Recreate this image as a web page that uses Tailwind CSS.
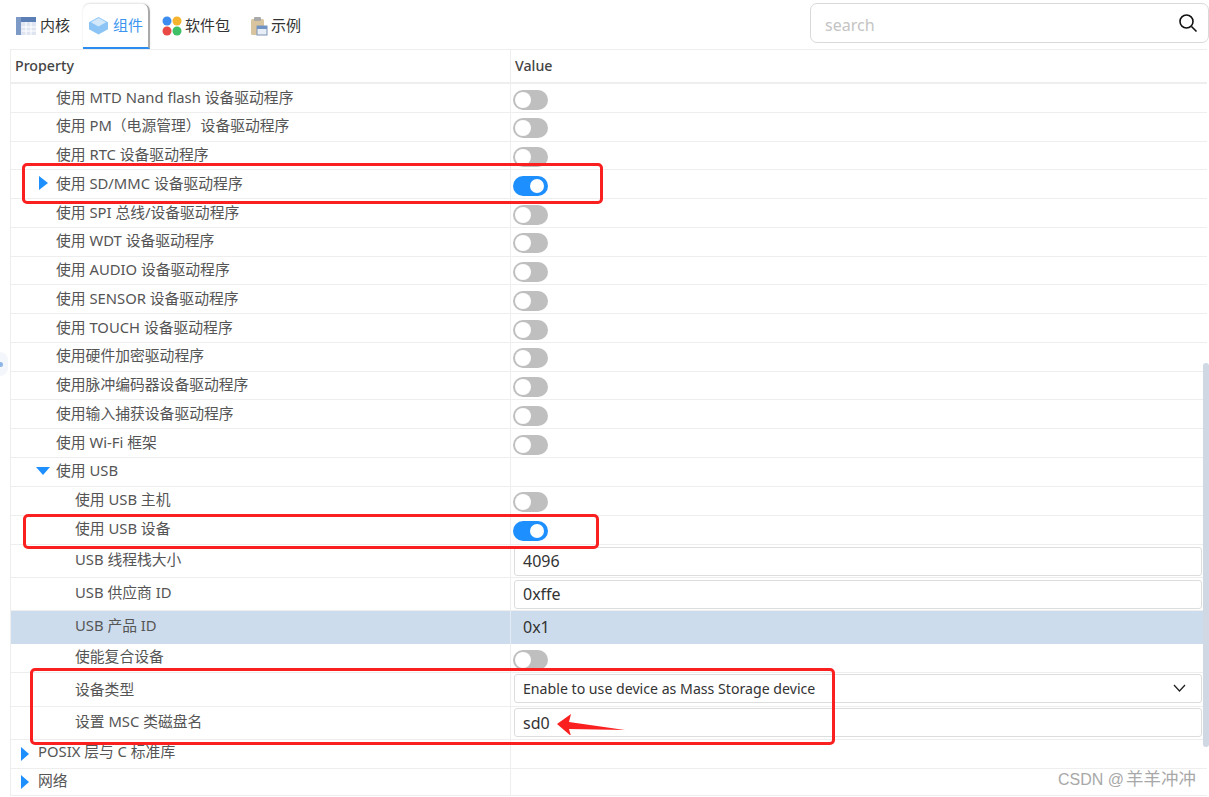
<!DOCTYPE html>
<html lang="en">
  <head>
    <meta charset="UTF-8" />
    <title>组件</title>
    <script src="https://cdn.jsdelivr.net/npm/@tailwindcss/browser@4"></script>
  </head>
  <body class="bg-white">
    <div class="relative w-[1209px] h-[797px] overflow-hidden bg-white font-['Noto_Sans','Noto_Sans_CJK_SC',sans-serif] text-[14.800px] leading-[21px] text-[#555]">
      <!-- Tabs -->
      <div class="flex h-[49px] items-end justify-between pr-[1px]">
        <div class="flex h-[45px] items-stretch pl-[16px] text-[15px] text-[#333]">
          <div class="flex items-center w-[67px] gap-[4px] pb-[2px]">
            <svg class="w-[20px] h-[20px]" viewBox="0 0 20 20">
              <rect x="0" y="1" width="20" height="18" fill="#dfe5f0" />
              <rect x="0" y="1" width="20" height="5" fill="#5b7fb5" />
              <rect x="0" y="1" width="5" height="18" fill="#7d9ac6" />
              <path d="M5.500 11h14.500M5.500 15h14.500M10 6v13M15 6v13" stroke="#fff" stroke-width="1" />
            </svg>
            <span>内核</span>
          </div>
          <div class="flex items-center w-[67px] gap-[5px] pl-[6px] rounded-t-[7px] border-b-[2px] border-b-[#2b8eee] border-r-[2px] border-r-[#aaa] shadow-[0_-1px_2px_rgba(0,0,0,0.12)] text-[#3c96f0]">
            <svg class="w-[19px] h-[19px]" viewBox="0 0 20 20">
              <path d="M10 1l10 5.500v7.500l-10 5.500-10-5.500v-7.500z" fill="#8cc4f5" />
              <path d="M10 2l8 4.500-8 4.500-8-4.500z" fill="#d3e9fb" />
            </svg>
            <span>组件</span>
          </div>
          <div class="flex items-center w-[88px] gap-[3px] pl-[12px] pb-[2px]">
            <svg class="w-[20px] h-[20px]" viewBox="0 0 20 20">
              <circle cx="5" cy="5" r="4.500" fill="#3d8df0" />
              <circle cx="15" cy="5" r="4.500" fill="#f5b32e" />
              <circle cx="5" cy="15" r="4.500" fill="#ea4a45" />
              <circle cx="15" cy="15" r="4.500" fill="#3fbf66" />
            </svg>
            <span>软件包</span>
          </div>
          <div class="flex items-center gap-[3px] pl-[12px] pb-[2px]">
            <svg class="w-[18px] h-[20px]" viewBox="0 0 18 20">
              <rect x="1" y="3" width="13" height="16" rx="1.500" fill="#d9c4a0" />
              <rect x="4" y="1" width="7" height="4" rx="1" fill="#a9a9a9" />
              <rect x="7" y="10" width="10" height="9" fill="#e8eef7" stroke="#7d94b5" />
              <rect x="7" y="10" width="10" height="3" fill="#6f93c4" />
            </svg>
            <span>示例</span>
          </div>
        </div>
        <div class="flex items-center justify-between w-[399px] h-[40px] mb-[6px] mr-[-1px] pl-[14px] pr-[10px] border border-[#d9d9d9] rounded-[7px]">
          <span class="pt-[5px] text-[16px] text-[#c4c4c4]">search</span>
          <svg class="w-[20px] h-[20px]" viewBox="0 0 20 20" fill="none" stroke="#111" stroke-width="1.600">
            <circle cx="8.500" cy="8.500" r="6.500" />
            <path d="M13.500 13.500l5 5" />
          </svg>
        </div>
      </div>

      <!-- Property table -->
      <div class="ml-[10px] w-[1197px] border-l border-[#eee] border-t">
        <div class="flex h-[34px] items-center border-b-[2px] border-[#eee] text-[14.200px] font-medium text-[#444]">
          <div class="w-[500px] pl-[4px] pb-[2px] border-r border-[#eee] h-full flex items-center">Property</div>
          <div class="pl-[4px] pb-[2px]">Value</div>
        </div>

        <div class="flex h-[28.770px] border-b border-[#eee]">
          <div class="w-[500px] pl-[45px] pt-[2.500px] border-r border-[#eee]">使用 MTD Nand flash 设备驱动程序</div>
          <div class="pl-[2px] pt-[5.500px]"><div class="flex items-center justify-start w-[35px] h-[20px] p-[2px] rounded-full bg-[#bfbfbf]"><div class="w-[16px] h-[16px] rounded-full bg-white"></div></div></div>
        </div>
        <div class="flex h-[28.770px] border-b border-[#eee]">
          <div class="w-[500px] pl-[45px] pt-[2.500px] border-r border-[#eee]">使用 PM（电源管理）设备驱动程序</div>
          <div class="pl-[2px] pt-[5.500px]"><div class="flex items-center justify-start w-[35px] h-[20px] p-[2px] rounded-full bg-[#bfbfbf]"><div class="w-[16px] h-[16px] rounded-full bg-white"></div></div></div>
        </div>
        <div class="flex h-[28.770px] border-b border-[#eee]">
          <div class="w-[500px] pl-[45px] pt-[2.500px] border-r border-[#eee]">使用 RTC 设备驱动程序</div>
          <div class="pl-[2px] pt-[5.500px]"><div class="flex items-center justify-start w-[35px] h-[20px] p-[2px] rounded-full bg-[#bfbfbf]"><div class="w-[16px] h-[16px] rounded-full bg-white"></div></div></div>
        </div>
        <div class="flex h-[28.770px] border-b border-[#eee]">
          <div class="relative w-[500px] pl-[45px] pt-[2.500px] border-r border-[#eee]"><span class="absolute left-[28px] top-[6px] w-0 h-0 border-y-[7px] border-y-transparent border-l-[9px] border-l-[#1e8fff]"></span>使用 SD/MMC 设备驱动程序</div>
          <div class="pl-[2px] pt-[5.500px]"><div class="flex items-center justify-end w-[35px] h-[20px] p-[3px] pr-[4px] rounded-full bg-[#1e8fff]"><div class="w-[14px] h-[14px] rounded-full bg-white"></div></div></div>
        </div>
        <div class="flex h-[28.770px] border-b border-[#eee]">
          <div class="w-[500px] pl-[45px] pt-[2.500px] border-r border-[#eee]">使用 SPI 总线/设备驱动程序</div>
          <div class="pl-[2px] pt-[5.500px]"><div class="flex items-center justify-start w-[35px] h-[20px] p-[2px] rounded-full bg-[#bfbfbf]"><div class="w-[16px] h-[16px] rounded-full bg-white"></div></div></div>
        </div>
        <div class="flex h-[28.770px] border-b border-[#eee]">
          <div class="w-[500px] pl-[45px] pt-[2.500px] border-r border-[#eee]">使用 WDT 设备驱动程序</div>
          <div class="pl-[2px] pt-[5.500px]"><div class="flex items-center justify-start w-[35px] h-[20px] p-[2px] rounded-full bg-[#bfbfbf]"><div class="w-[16px] h-[16px] rounded-full bg-white"></div></div></div>
        </div>
        <div class="flex h-[28.770px] border-b border-[#eee]">
          <div class="w-[500px] pl-[45px] pt-[2.500px] border-r border-[#eee]">使用 AUDIO 设备驱动程序</div>
          <div class="pl-[2px] pt-[5.500px]"><div class="flex items-center justify-start w-[35px] h-[20px] p-[2px] rounded-full bg-[#bfbfbf]"><div class="w-[16px] h-[16px] rounded-full bg-white"></div></div></div>
        </div>
        <div class="flex h-[28.770px] border-b border-[#eee]">
          <div class="w-[500px] pl-[45px] pt-[2.500px] border-r border-[#eee]">使用 SENSOR 设备驱动程序</div>
          <div class="pl-[2px] pt-[5.500px]"><div class="flex items-center justify-start w-[35px] h-[20px] p-[2px] rounded-full bg-[#bfbfbf]"><div class="w-[16px] h-[16px] rounded-full bg-white"></div></div></div>
        </div>
        <div class="flex h-[28.770px] border-b border-[#eee]">
          <div class="w-[500px] pl-[45px] pt-[2.500px] border-r border-[#eee]">使用 TOUCH 设备驱动程序</div>
          <div class="pl-[2px] pt-[5.500px]"><div class="flex items-center justify-start w-[35px] h-[20px] p-[2px] rounded-full bg-[#bfbfbf]"><div class="w-[16px] h-[16px] rounded-full bg-white"></div></div></div>
        </div>
        <div class="flex h-[28.770px] border-b border-[#eee]">
          <div class="w-[500px] pl-[45px] pt-[2.500px] border-r border-[#eee]">使用硬件加密驱动程序</div>
          <div class="pl-[2px] pt-[5.500px]"><div class="flex items-center justify-start w-[35px] h-[20px] p-[2px] rounded-full bg-[#bfbfbf]"><div class="w-[16px] h-[16px] rounded-full bg-white"></div></div></div>
        </div>
        <div class="flex h-[28.770px] border-b border-[#eee]">
          <div class="w-[500px] pl-[45px] pt-[2.500px] border-r border-[#eee]">使用脉冲编码器设备驱动程序</div>
          <div class="pl-[2px] pt-[5.500px]"><div class="flex items-center justify-start w-[35px] h-[20px] p-[2px] rounded-full bg-[#bfbfbf]"><div class="w-[16px] h-[16px] rounded-full bg-white"></div></div></div>
        </div>
        <div class="flex h-[28.770px] border-b border-[#eee]">
          <div class="w-[500px] pl-[45px] pt-[2.500px] border-r border-[#eee]">使用输入捕获设备驱动程序</div>
          <div class="pl-[2px] pt-[5.500px]"><div class="flex items-center justify-start w-[35px] h-[20px] p-[2px] rounded-full bg-[#bfbfbf]"><div class="w-[16px] h-[16px] rounded-full bg-white"></div></div></div>
        </div>
        <div class="flex h-[28.770px] border-b border-[#eee]">
          <div class="w-[500px] pl-[45px] pt-[2.500px] border-r border-[#eee]">使用 Wi-Fi 框架</div>
          <div class="pl-[2px] pt-[5.500px]"><div class="flex items-center justify-start w-[35px] h-[20px] p-[2px] rounded-full bg-[#bfbfbf]"><div class="w-[16px] h-[16px] rounded-full bg-white"></div></div></div>
        </div>

        <!-- USB group -->
        <div class="flex h-[29px] border-b border-[#eee]">
          <div class="relative w-[500px] pl-[45px] pt-[2px] border-r border-[#eee]"><span class="absolute left-[25px] top-[9px] w-0 h-0 border-x-[7px] border-x-transparent border-t-[8px] border-t-[#1e8fff]"></span>使用 USB</div>
        </div>
        <div class="flex h-[29px] border-b border-[#eee]">
          <div class="w-[500px] pl-[64px] pt-[2px] border-r border-[#eee]">使用 USB 主机</div>
          <div class="pl-[2px] pt-[5px]"><div class="flex items-center justify-start w-[35px] h-[20px] p-[2px] rounded-full bg-[#bfbfbf]"><div class="w-[16px] h-[16px] rounded-full bg-white"></div></div></div>
        </div>
        <div class="flex h-[29px] border-b border-[#eee]">
          <div class="w-[500px] pl-[64px] pt-[2px] border-r border-[#eee]">使用 USB 设备</div>
          <div class="pl-[2px] pt-[5px]"><div class="flex items-center justify-end w-[35px] h-[20px] p-[3px] pr-[4px] rounded-full bg-[#1e8fff]"><div class="w-[14px] h-[14px] rounded-full bg-white"></div></div></div>
        </div>
        <div class="flex h-[33px] border-b border-[#eee]">
          <div class="w-[500px] pl-[64px] pt-[4.500px] border-r border-[#eee]">USB 线程栈大小</div>
          <div class="pl-[3px] pt-[2px] flex-1 pr-[5px]"><div class="flex items-center h-[29px] pl-[8px] border border-[#ddd] rounded-[3px] text-[16px] text-[#333]">4096</div></div>
        </div>
        <div class="flex h-[33px] border-b border-[#eee]">
          <div class="w-[500px] pl-[64px] pt-[4px] border-r border-[#eee]">USB 供应商 ID</div>
          <div class="pl-[3px] pt-[2px] flex-1 pr-[5px]"><div class="flex items-center h-[29px] pl-[8px] border border-[#ddd] rounded-[3px] text-[16px] text-[#333]">0xffe</div></div>
        </div>
        <div class="flex h-[33px] bg-[#cddcec]">
          <div class="w-[500px] pl-[64px] pt-[4px] border-r border-[#e4ebf3]">USB 产品 ID</div>
          <div class="pl-[12px] pt-[6px] text-[16px] text-[#333]">0x1</div>
        </div>
        <div class="flex h-[29px] border-b border-[#eee]">
          <div class="w-[500px] pl-[64px] pt-[2px] border-r border-[#eee]">使能复合设备</div>
          <div class="pl-[2px] pt-[6px]"><div class="flex items-center justify-start w-[35px] h-[20px] p-[2px] rounded-full bg-[#bfbfbf]"><div class="w-[16px] h-[16px] rounded-full bg-white"></div></div></div>
        </div>
        <div class="flex h-[34px] border-b border-[#eee]">
          <div class="w-[500px] pl-[64px] pt-[6px] border-r border-[#eee]">设备类型</div>
          <div class="pl-[3px] pt-[1px] flex-1 pr-[5px]"><div class="flex items-center justify-between h-[29px] pl-[8px] pr-[15px] border border-[#ddd] rounded-[3px] text-[14.150px] text-[#333]">
            <span>Enable to use device as Mass Storage device</span>
            <svg class="w-[13px] h-[8px]" viewBox="0 0 13 8" fill="none" stroke="#222" stroke-width="1.300"><path d="M1 1l5.500 6 5.500-6" /></svg>
          </div></div>
        </div>
        <div class="flex h-[33px] border-b border-[#eee]">
          <div class="w-[500px] pl-[64px] pt-[4px] border-r border-[#eee]">设置 MSC 类磁盘名</div>
          <div class="pl-[3px] pt-[1px] flex-1 pr-[5px]"><div class="flex items-center h-[29px] pl-[8px] pt-[2px] border border-[#ddd] rounded-[3px] text-[16px] text-[#333]">sd0</div></div>
        </div>
        <div class="flex h-[29px] border-b border-[#eee]">
          <div class="relative w-[500px] pl-[27px] pt-[1px] border-r border-[#eee]"><span class="absolute left-[10px] top-[7px] w-0 h-0 border-y-[7px] border-y-transparent border-l-[8px] border-l-[#1e8fff]"></span>POSIX 层与 C 标准库</div>
        </div>
        <div class="flex h-[27px] border-b border-[#eee]">
          <div class="relative w-[500px] pl-[27px] pt-[1px] border-r border-[#eee]"><span class="absolute left-[10px] top-[6px] w-0 h-0 border-y-[7px] border-y-transparent border-l-[8px] border-l-[#1e8fff]"></span>网络</div>
        </div>
      </div>

      <!-- Scrollbar and side handle -->
      <div class="absolute left-[1203px] top-[363px] w-[6px] h-[384px] rounded-[3px] bg-[#cfd8e3]"></div>
      <div class="absolute left-[-8px] top-[352px] w-[16px] h-[24px] rounded-full bg-[#f3f6fa]"></div>
      <div class="absolute left-0 top-[362px] w-[3px] h-[5px] rounded-r-full bg-[#8db6e6]"></div>

      <!-- Red annotations -->
      <div class="absolute left-[22px] top-[163px] w-[581px] h-[41px] border-[3px] border-[#fb2020] rounded-[5px]"></div>
      <div class="absolute left-[23px] top-[514px] w-[576px] h-[35px] border-[3px] border-[#fb2020] rounded-[5px]"></div>
      <div class="absolute left-[30px] top-[668px] w-[805px] h-[77px] border-[3px] border-[#fb2020] rounded-[5px]"></div>
      <svg class="absolute left-[556px] top-[713px] w-[70px] h-[22px]" viewBox="0 0 70 22">
        <path d="M1 11l14-10-2 8 56 8-56-1 2 7z" fill="#fb2020" />
      </svg>

      <!-- Watermark -->
      <div class="absolute left-[1058px] top-[768px] text-[16px] leading-[22px] text-[#a8a8a8] font-['Liberation_Sans','Noto_Sans_CJK_SC',sans-serif]">CSDN @<span class="pl-[2px] text-[17.500px]">羊羊冲冲</span></div>
    </div>
  </body>
</html>
